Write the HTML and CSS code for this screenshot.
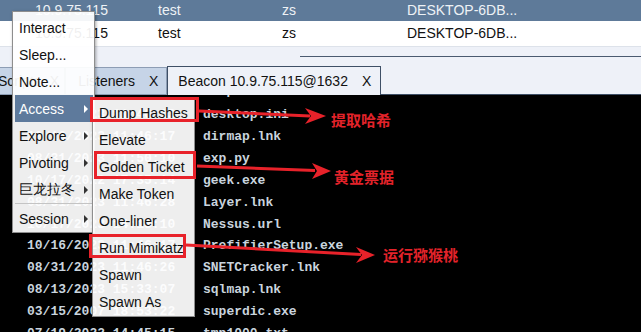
FILE: index.html
```html
<!DOCTYPE html>
<html lang="en">
  <head>
    <meta charset="UTF-8" />
    <meta name="viewport" content="width=device-width, initial-scale=1.0" />
    <title>Beacon</title>
    <link rel="stylesheet" href="styles.css">
  </head>
  <body>
    <!-- Sessions table -->
    <div class="sessions">
      <div class="session-row selected">
        <span>10.9.75.115</span>
        <span>test</span>
        <span>zs</span>
        <span>DESKTOP-6DB...</span>
      </div>
      <div class="session-row">
        <span>10.9.75.115</span>
        <span>test</span>
        <span>zs</span>
        <span>DESKTOP-6DB...</span>
      </div>
    </div>

    <div class="split">
      <div class="split-line"></div>
    </div>

    <!-- Tabs -->
    <div class="tabs">
      <div class="tab tab-first"><span>Scripts</span><span>X</span></div>
      <div class="tab"><span>Listeners</span><span>X</span></div>
      <div class="tab active"><span>Beacon 10.9.75.115@1632</span><span>X</span></div>
      <div class="tab-fill"></div>
    </div>

    <!-- Beacon console -->
    <div class="console">
      <div class="listing">
        <div class="line partial"><span class="date">08/31/2023 11:46:26</span><span>temp</span></div>
        <div class="line"><span class="date">08/31/2023 11:46:13</span><span>desktop.ini</span></div>
        <div class="line"><span class="date">10/16/2023 11:46:17</span><span>dirmap.lnk</span></div>
        <div class="line"><span class="date">08/31/2023 11:50:10</span><span>exp.py</span></div>
        <div class="line"><span class="date">10/17/2022 17:35:14</span><span>geek.exe</span></div>
        <div class="line"><span class="date">08/31/2023 11:46:28</span><span>Layer.lnk</span></div>
        <div class="line"><span class="date">10/17/2023 14:13:10</span><span>Nessus.url</span></div>
        <div class="line"><span class="date">10/16/2023 11:46:17</span><span>PrefifierSetup.exe</span></div>
        <div class="line"><span class="date">08/31/2023 11:46:26</span><span>SNETCracker.lnk</span></div>
        <div class="line"><span class="date">08/13/2023 15:33:07</span><span>sqlmap.lnk</span></div>
        <div class="line"><span class="date">03/15/2007 18:53:22</span><span>superdic.exe</span></div>
        <div class="line"><span class="date">07/19/2022 14:45:15</span><span>tmp1000.txt</span></div>
      </div>
    </div>

    <!-- Context menu -->
    <div class="menu">
      <div class="menu-item">Interact</div>
      <div class="menu-item">Sleep...</div>
      <div class="menu-item">Note...</div>
      <div class="menu-item active">Access<i class="arrow"></i></div>
      <div class="menu-item">Explore<i class="arrow"></i></div>
      <div class="menu-item">Pivoting<i class="arrow"></i></div>
      <div class="menu-item">巨龙拉冬<i class="arrow"></i></div>
      <div class="menu-sep"></div>
      <div class="menu-item">Session<i class="arrow"></i></div>
    </div>

    <div class="submenu">
      <div class="menu-item">Dump Hashes</div>
      <div class="menu-item">Elevate</div>
      <div class="menu-item">Golden Ticket</div>
      <div class="menu-item">Make Token</div>
      <div class="menu-item">One-liner</div>
      <div class="menu-item">Run Mimikatz</div>
      <div class="menu-item">Spawn</div>
      <div class="menu-item">Spawn As</div>
    </div>

    <!-- Annotations -->
    <div class="mark mark-hash"></div>
    <div class="mark mark-ticket"></div>
    <div class="mark mark-mimi"></div>

    <svg class="arrows" width="641" height="332" viewBox="0 0 641 332">
      <g fill="#e8222a" stroke="#e8222a" stroke-width="3">
        <line x1="199" y1="111" x2="310" y2="116" />
        <polygon points="305,108 326,116 305,124 311,116" stroke="none" />
        <line x1="197" y1="166" x2="315" y2="170.5" />
        <polygon points="312,163 331,171 312,179 317,171" stroke="none" />
        <line x1="186" y1="245" x2="361" y2="254.5" />
        <polygon points="356,247 375,255 356,263 362,255" stroke="none" />
      </g>
    </svg>

    <div class="note note-hash">提取哈希</div>
    <div class="note note-ticket">黄金票据</div>
    <div class="note note-mimi">运行猕猴桃</div>
  </body>
</html>
```

FILE: styles.css
```css
body {
  font-family: "Liberation Sans", Arial, sans-serif;
  font-size: 14px;
  background: #eef1f8;
  margin: 0;
  width: 641px;
  height: 332px;
  overflow: hidden;
  position: relative;
  display: flex;
  flex-direction: column;
}

/* sessions table */
.sessions {
  flex-shrink: 0;
  background: #fff;
}

.session-row {
  display: grid;
  grid-template-columns: 123px 124px 125px 1fr;
  padding-left: 35px;
  height: 21px;
  line-height: 21px;
  color: #111;
}

.session-row + .session-row {
  height: 25px;
  line-height: 25px;
}

.session-row.selected {
  background: #5e7a99;
  color: #eef2f6;
}

.split {
  flex-shrink: 0;
  height: 20px;
  background: #eef1f8;
  border-top: 1px solid #dde2ea;
  box-sizing: border-box;
}

.split-line {
  margin: 9px 0 0 300px;
  border-top: 1px solid #4a5a70;
}

/* tabs */
.tabs {
  flex-shrink: 0;
  display: flex;
  align-items: flex-end;
  height: 29px;
}

.tab {
  display: flex;
  align-items: center;
  gap: 14px;
  height: 28px;
  padding: 0 8px 0 12px;
  box-sizing: border-box;
  background: #c6d4e7;
  border: 1px solid #8d9db4;
  color: #111;
}

.tab-first {
  margin-left: -15px;
  gap: 9px;
  padding-right: 5px;
}

.tab.active {
  height: 29px;
  padding: 0 9px 0 10px;
  background: #eef1f8;
  border-color: #3e4f66;
  border-bottom: none;
}

.tab-fill {
  flex: 1;
  border-bottom: 1px solid #3e4f66;
}

/* console */
.console {
  flex: 1 1 0;
  min-height: 0;
  background: #000;
  overflow: hidden;
}

.listing {
  margin-top: -15px;
  font-family: "Liberation Mono", "DejaVu Sans Mono", monospace;
  font-size: 13px;
  font-weight: bold;
  color: #c9d4de;
}

.line {
  display: flex;
  height: 21.9px;
  line-height: 21.9px;
  padding-left: 27px;
  white-space: pre;
}

.line.partial {
  padding-bottom: 2.2px;
}

.date {
  width: 176px;
}

/* popup menus */
.menu,
.submenu {
  position: absolute;
  box-sizing: border-box;
  background: rgba(255, 255, 255, 0.935);
  border: 1px solid #8e8e8e;
  box-shadow: 1px 1px 3px rgba(0, 0, 0, 0.35);
  color: #111;
}

.menu {
  left: 12px;
  top: 11px;
  width: 83px;
  padding-top: 2px;
}

.submenu {
  left: 92px;
  top: 97px;
  width: 103px;
  padding: 1px 0;
}

.menu-item {
  display: flex;
  align-items: center;
  justify-content: space-between;
  height: 27px;
  padding: 0 5px 0 4px;
  margin: 0 1px 0 2px;
}

.submenu .menu-item {
  margin: 0;
  padding-left: 6px;
}

.menu-item.active {
  background: #5e7a9c;
  color: #fff;
}

.arrow {
  width: 0;
  height: 0;
  border-left: 4px solid #333;
  border-top: 4px solid transparent;
  border-bottom: 4px solid transparent;
}

.menu-item.active .arrow {
  border-left-color: #fff;
}

.menu-sep {
  height: 2px;
  margin: 0 2px;
  border-top: 1px solid #c4c4c4;
  box-sizing: border-box;
}

/* red annotations */
.mark {
  position: absolute;
  border: 3px solid #e8222a;
  box-sizing: border-box;
}

.mark-hash {
  left: 90px;
  top: 97px;
  width: 109px;
  height: 25px;
}

.mark-ticket {
  left: 94px;
  top: 151px;
  width: 102px;
  height: 28px;
}

.mark-mimi {
  left: 89px;
  top: 234px;
  width: 97px;
  height: 24px;
}

.arrows {
  position: absolute;
  left: 0;
  top: 0;
}

.note {
  position: absolute;
  font-family: "Noto Sans CJK SC", sans-serif;
  font-size: 15px;
  font-weight: bold;
  line-height: 20px;
  color: #e3232a;
}

.note-hash {
  left: 331px;
  top: 110px;
}

.note-ticket {
  left: 334px;
  top: 167px;
}

.note-mimi {
  left: 383px;
  top: 245px;
}
```
